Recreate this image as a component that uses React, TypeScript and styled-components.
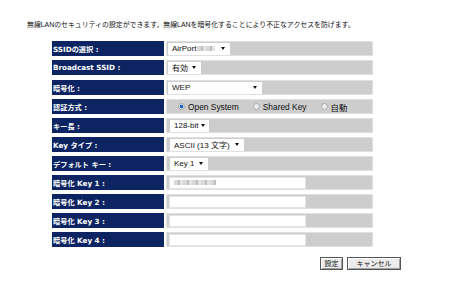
import React from "react";
import styled, { createGlobalStyle } from "styled-components";

const Global = createGlobalStyle`
  html, body { margin: 0; padding: 0; background: #fff; }
  body { width: 450px; height: 284px; overflow: hidden; }
`;

const Page = styled.div`
  padding: 20px 0 0 27px;
  font-family: "Liberation Sans", "Noto Sans CJK JP", sans-serif;
`;

const Intro = styled.p`
  margin: 0;
  font-size: 6.9px;
  line-height: 10px;
  color: #111;
  white-space: nowrap;
`;

const Form = styled.div`
  margin: 11px 0 0 25px;
  width: 321px;
  display: flex;
  flex-direction: column;
`;

const Group = styled.div<{ $top?: number }>`
  display: flex;
  flex-direction: column;
  gap: 4px;
  margin-top: ${(p) => p.$top ?? 0}px;
`;

const Row = styled.div`
  display: grid;
  grid-template-columns: 112px 207px;
  column-gap: 2px;
  height: 15px;
`;

const Label = styled.div`
  background: #0c2562;
  color: #fff;
  font-family: "DejaVu Sans", "Noto Sans CJK JP", sans-serif;
  font-weight: bold;
  font-size: 7.2px;
  display: flex;
  align-items: center;
  padding-left: 1px;
  white-space: nowrap;
`;

const Value = styled.div<{ $pad?: number }>`
  background: #cdcdcd;
  box-shadow: inset 0 0 0 1px #e0e0e0;
  display: flex;
  align-items: center;
  padding-left: ${(p) => p.$pad ?? 2}px;
  font-size: 8px;
  color: #111;
`;

const Select = styled.div<{ $w: number }>`
  width: ${(p) => p.$w}px;
  height: 12px;
  box-sizing: border-box;
  background: #fff;
  display: flex;
  align-items: center;
  justify-content: space-between;
  padding: 0 5px 0 4px;
  white-space: nowrap;
`;

const Arrow = styled.span`
  width: 0;
  height: 0;
  border-left: 2.5px solid transparent;
  border-right: 2.5px solid transparent;
  border-top: 3px solid #111;
  flex: none;
  margin-left: 3px;
`;

const Blur = styled.span<{ $w: number }>`
  display: inline-block;
  width: ${(p) => p.$w}px;
  height: 5px;
  margin-left: 1px;
  vertical-align: middle;
  background: repeating-linear-gradient(90deg, #d8d8d8 0 4px, #bdbdbd 4px 6px, #e4e4e4 6px 9px);
  filter: blur(0.4px);
`;

const Radios = styled.div`
  display: flex;
  align-items: center;
  padding-left: 12px;
`;

const RadioItem = styled.label<{ $gap: number }>`
  display: flex;
  align-items: center;
  gap: 3px;
  margin-right: ${(p) => p.$gap}px;
  white-space: nowrap;
  font-size: 8.4px;
`;

const Dot = styled.span<{ $on?: boolean }>`
  width: 7px;
  height: 7px;
  box-sizing: border-box;
  border-radius: 50%;
  border: 1px solid #a9a9a9;
  background: ${(p) =>
    p.$on ? "radial-gradient(circle, #2a66c4 0 1.7px, #e4eaf3 2.2px)" : "#ececec"};
`;

const Input = styled.div`
  width: 137px;
  height: 12px;
  box-sizing: border-box;
  background: #fff;
  border: 1px solid #e4e4e4;
  display: flex;
  align-items: center;
  padding-left: 3px;
`;

const Buttons = styled.div`
  display: flex;
  justify-content: flex-end;
  gap: 4px;
  width: 374px;
  margin-top: 10px;
`;

const Button = styled.button<{ $w: number }>`
  width: ${(p) => p.$w}px;
  height: 13px;
  padding: 0;
  box-sizing: border-box;
  background: #ececec;
  border: 1px solid #555;
  box-shadow: inset 1px 1px 0 #fff, inset -1px -1px 0 #a0a0a0;
  font-family: "Noto Sans CJK JP", sans-serif;
  font-size: 7px;
  line-height: 11px;
  color: #111;
`;

export default function App() {
  return (
    <>
      <Global />
      <Page>
        <Intro>
          無線LANのセキュリティの設定ができます。無線LANを暗号化することにより不正なアクセスを防げます。
        </Intro>
        <Form>
          <Group>
            <Row>
              <Label>SSIDの選択 :</Label>
              <Value>
                <Select $w={62}>
                  <span>
                    AirPort<Blur $w={18} />
                  </span>
                  <Arrow />
                </Select>
              </Value>
            </Row>
            <Row>
              <Label>Broadcast SSID :</Label>
              <Value>
                <Select $w={33}>
                  <span>有効</span>
                  <Arrow />
                </Select>
              </Value>
            </Row>
          </Group>
          <Group $top={5}>
            <Row>
              <Label>暗号化 :</Label>
              <Value>
                <Select $w={94}>
                  <span>WEP</span>
                  <Arrow />
                </Select>
              </Value>
            </Row>
            <Row>
              <Label>認証方式 :</Label>
              <Value $pad={0}>
                <Radios>
                  <RadioItem $gap={14}>
                    <Dot $on />
                    Open System
                  </RadioItem>
                  <RadioItem $gap={14}>
                    <Dot />
                    Shared Key
                  </RadioItem>
                  <RadioItem $gap={0}>
                    <Dot />
                    自動
                  </RadioItem>
                </Radios>
              </Value>
            </Row>
            <Row>
              <Label>キー長 :</Label>
              <Value $pad={4}>
                <Select $w={39}>
                  <span>128-bit</span>
                  <Arrow />
                </Select>
              </Value>
            </Row>
            <Row>
              <Label>Key タイプ :</Label>
              <Value $pad={4}>
                <Select $w={74}>
                  <span>ASCII (13 文字)</span>
                  <Arrow />
                </Select>
              </Value>
            </Row>
            <Row>
              <Label>デフォルト キー :</Label>
              <Value $pad={4}>
                <Select $w={38}>
                  <span>Key 1</span>
                  <Arrow />
                </Select>
              </Value>
            </Row>
            <Row>
              <Label>暗号化 Key 1 :</Label>
              <Value $pad={3}>
                <Input>
                  <Blur $w={42} />
                </Input>
              </Value>
            </Row>
            <Row>
              <Label>暗号化 Key 2 :</Label>
              <Value $pad={3}>
                <Input />
              </Value>
            </Row>
            <Row>
              <Label>暗号化 Key 3 :</Label>
              <Value $pad={3}>
                <Input />
              </Value>
            </Row>
            <Row>
              <Label>暗号化 Key 4 :</Label>
              <Value $pad={3}>
                <Input />
              </Value>
            </Row>
          </Group>
        </Form>
        <Buttons>
          <Button $w={23}>設定</Button>
          <Button $w={54}>キャンセル</Button>
        </Buttons>
      </Page>
    </>
  );
}
